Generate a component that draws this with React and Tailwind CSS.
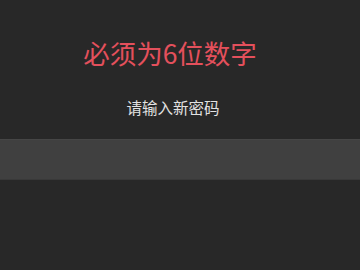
export default function App() {
  return (
    <div
      className="w-[360px] h-[270px] bg-[#282828] flex flex-col overflow-hidden"
      style={{ fontFamily: '"Noto Sans CJK SC", "Noto Sans", sans-serif' }}
    >
      <div className="mt-[38px] pr-[20px] h-[29px] leading-[29px] text-[26.5px] text-center text-[#e4505c]">必须为6位数字</div>
      <div className="mt-[30px] pr-[14px] h-[20px] leading-[20px] text-[15.5px] text-center text-[#e2e2e2]">请输入新密码</div>
      <div className="mt-[22px] w-full h-[41px] bg-[#404040] border-t border-t-[#464646] border-b border-b-[#393939]" />
    </div>
  );
}
